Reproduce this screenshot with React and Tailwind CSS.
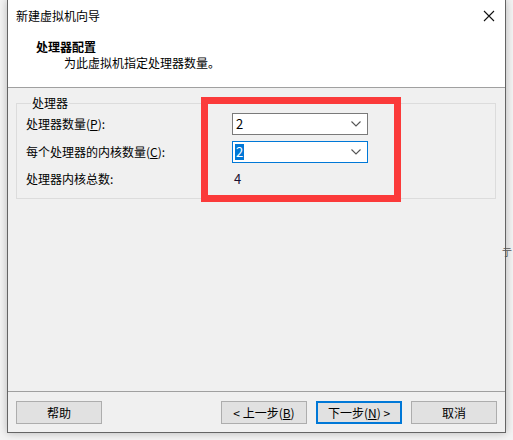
import React from "react";

const font = { fontFamily: '"Noto Sans CJK SC", "Microsoft YaHei", sans-serif' };

function Chevron() {
  return (
    <svg width="10" height="6" viewBox="0 0 10 6" className="shrink-0">
      <path d="M0.5 0.5 L5 5 L9.5 0.5" fill="none" stroke="#555" strokeWidth="1.1" />
    </svg>
  );
}

function Combo({ focused }) {
  return (
    <div
      className={`w-[136px] h-[22px] bg-white border flex items-center justify-between pl-[2px] pr-[6px] ${
        focused ? "border-[#0078d7]" : "border-[#7a7a7a]"
      }`}
    >
      {focused ? (
        <span className="bg-[#0078d7] text-white text-[13px] leading-[16px] px-[1px]">2</span>
      ) : (
        <span className="text-black text-[13px] leading-[16px] px-[1px]">2</span>
      )}
      <Chevron />
    </div>
  );
}

function Btn({ children, primary }) {
  return (
    <div
      className={`w-[86px] h-[23px] flex items-center justify-center bg-[#e1e1e1] text-[12px] text-black ${
        primary ? "border-2 border-[#0078d7]" : "border border-[#adadad]"
      }`}
    >
      {children}
    </div>
  );
}

export default function App() {
  return (
    <div className="relative w-[513px] h-[440px] bg-[#f3f3f3] overflow-hidden" style={font}>
      <div className="ml-[7px] w-[499px] h-[433px] bg-[#f0f0f0] border-x border-b border-[#646464] flex flex-col shadow-[0_0_8px_rgba(0,0,0,0.25)]">
        {/* title + header */}
        <div className="h-[88px] bg-white border-b border-[#a0a0a0] flex flex-col">
          <div className="h-[31px] flex items-center justify-between pl-[8px] pr-[10px]">
            <span className="text-[12px] text-black">新建虚拟机向导</span>
            <svg width="12" height="12" viewBox="0 0 12 12">
              <path d="M1 1 L11 11 M11 1 L1 11" stroke="#111" strokeWidth="1.1" />
            </svg>
          </div>
          <div className="pl-[28px] pt-[7px] flex flex-col">
            <span className="text-[12px] font-bold text-black leading-[17px]">处理器配置</span>
            <span className="pl-[28px] text-[12px] text-black leading-[16px]">为此虚拟机指定处理器数量。</span>
          </div>
        </div>

        {/* body */}
        <div className="flex-1 px-[8px] pt-[8px]">
          <fieldset className="border border-[#dcdcdc] w-[480px] h-[103px] pl-[9px]">
            <legend className="ml-[5px] px-[1px] text-[12px] text-black leading-[14px]">处理器</legend>
            <div className="grid grid-cols-[206px_136px] gap-y-[6px] pt-[3px] items-center text-[12px] text-black">
              <span>
                处理器数量(<span className="underline">P</span>):
              </span>
              <Combo />
              <span>
                每个处理器的内核数量(<span className="underline">C</span>):
              </span>
              <Combo focused />
              <span>处理器内核总数:</span>
              <span className="pl-[2px] text-[13px] text-[#1a1030]">4</span>
            </div>
          </fieldset>
        </div>

        {/* footer */}
        <div className="border-t border-[#a0a0a0] h-[41px] pt-[9px] px-[8px] flex">
          <Btn>帮助</Btn>
          <div className="ml-auto flex gap-[9px]">
            <Btn>
              &lt; 上一步(<span className="underline">B</span>)
            </Btn>
            <Btn primary>
              下一步(<span className="underline">N</span>) &gt;
            </Btn>
            <Btn>取消</Btn>
          </div>
        </div>
      </div>

      {/* red annotation box */}
      <div className="absolute left-[201px] top-[97px] w-[200px] h-[105px] border-[7px] border-[#fb3a3a]" />

      {/* background glyph peeking out */}
      <span className="absolute left-[502px] top-[246px] text-[10px] leading-[12px] text-[#555]">亍</span>
    </div>
  );
}
